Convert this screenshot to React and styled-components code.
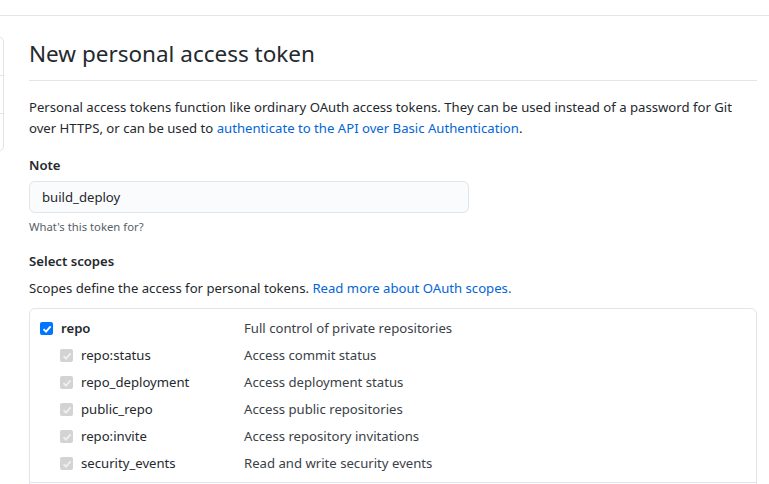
import React from "react";
import styled, { createGlobalStyle } from "styled-components";

const Global = createGlobalStyle`
  html, body { margin: 0; padding: 0; background: #fff; }
  body {
    font-family: "Segoe UI", "Noto Sans", "Liberation Sans", sans-serif;
    font-size: 13.15px;
    line-height: 21px;
    color: #24292e;
    overflow: hidden;
  }
  * { box-sizing: border-box; }
`;

const Header = styled.div`
  height: 16px;
  border-bottom: 1px solid #e1e4e8;
`;

const Layout = styled.div`
  display: flex;
  align-items: flex-start;
  margin-top: 20px;
  margin-left: -196px;
`;

const Sidebar = styled.nav`
  flex: 0 0 200px;
  border: 1px solid #e1e4e8;
  border-radius: 6px;
  display: flex;
  flex-direction: column;
`;

const SideItem = styled.div`
  height: 38px;
  border-top: ${(p) => (p.$first ? "none" : "1px solid #e1e4e8")};
`;

const Main = styled.main`
  flex: 0 0 728px;
  margin-left: 25px;
`;

const Title = styled.h2`
  margin: 0 0 16px;
  padding-bottom: 8px;
  font-size: 22.5px;
  font-weight: 400;
  line-height: 36px;
  border-bottom: 1px solid #e1e4e8;
`;

const Intro = styled.p`
  margin: 0;
  line-height: 21px;
`;

const Link = styled.a`
  color: #0366d6;
  text-decoration: none;
`;

const Group = styled.div`
  margin-top: ${(p) => p.$mt}px;
`;

const Label = styled.div`
  font-weight: 600;
  line-height: 21px;
`;

const Input = styled.input`
  display: block;
  margin-top: 5px;
  width: 440px;
  height: 32px;
  padding: 5px 12px;
  font: inherit;
  color: #24292e;
  background: #fafbfc;
  border: 1px solid #e1e4e8;
  border-radius: 6px;
  outline: none;
`;

const Note = styled.div`
  margin-top: 5px;
  font-size: 11.3px;
  line-height: 18px;
  color: #586069;
`;

const Desc = styled.p`
  margin: 6px 0 0;
  line-height: 21px;
`;

const ScopeBox = styled.div`
  margin-top: 9px;
  border: 1px solid #e1e4e8;
  border-radius: 6px 6px 0 0;
  padding-top: 6px;
  padding-bottom: 5px;
`;

const ScopeRow = styled.div`
  display: flex;
  align-items: center;
  height: 27px;
  padding-left: ${(p) => (p.$sub ? 30 : 10)}px;
`;

const Check = styled.span`
  flex: 0 0 13px;
  width: 13px;
  height: 13px;
  border-radius: 2px;
  background: ${(p) => (p.$disabled ? "#d3d3d3" : "#0075ff")};
  display: flex;
  align-items: center;
  justify-content: center;
  margin-right: 8px;
`;

const ScopeName = styled.span`
  flex: 0 0 ${(p) => (p.$sub ? 163 : 183)}px;
  font-weight: ${(p) => (p.$sub ? 400 : 600)};
`;

const ScopeDesc = styled.span`
  color: #3a4148;
`;

const NextGroup = styled.div`
  border: 1px solid #e1e4e8;
  border-top: none;
  height: 20px;
`;

const CheckMark = ({ color }) => (
  <svg width="10" height="10" viewBox="0 0 10 10">
    <path d="M1.5 5.2 L4 7.6 L8.6 2.4" fill="none" stroke={color} strokeWidth="1.8" />
  </svg>
);

const scopes = [
  ["repo:status", "Access commit status"],
  ["repo_deployment", "Access deployment status"],
  ["public_repo", "Access public repositories"],
  ["repo:invite", "Access repository invitations"],
  ["security_events", "Read and write security events"],
];

export default function App() {
  return (
    <>
      <Global />
      <Header />
      <Layout>
        <Sidebar>
          <SideItem $first />
          <SideItem />
          <SideItem />
        </Sidebar>
        <Main>
          <Title>New personal access token</Title>
          <Intro>
            Personal access tokens function like ordinary OAuth access tokens. They can be used instead of a password for Git
            over HTTPS, or can be used to <Link href="#">authenticate to the API over Basic Authentication</Link>.
          </Intro>
          <Group $mt={16}>
            <Label>Note</Label>
            <Input defaultValue="build_deploy" />
            <Note>What's this token for?</Note>
          </Group>
          <Group $mt={15}>
            <Label>Select scopes</Label>
            <Desc>
              Scopes define the access for personal tokens. <Link href="#">Read more about OAuth scopes.</Link>
            </Desc>
            <ScopeBox>
              <ScopeRow>
                <Check>
                  <CheckMark color="#fff" />
                </Check>
                <ScopeName>repo</ScopeName>
                <ScopeDesc>Full control of private repositories</ScopeDesc>
              </ScopeRow>
              {scopes.map(([n, d]) => (
                <ScopeRow $sub key={n}>
                  <Check $disabled>
                    <CheckMark color="#f0f0f0" />
                  </Check>
                  <ScopeName $sub>{n}</ScopeName>
                  <ScopeDesc>{d}</ScopeDesc>
                </ScopeRow>
              ))}
            </ScopeBox>
            <NextGroup />
          </Group>
        </Main>
      </Layout>
    </>
  );
}
